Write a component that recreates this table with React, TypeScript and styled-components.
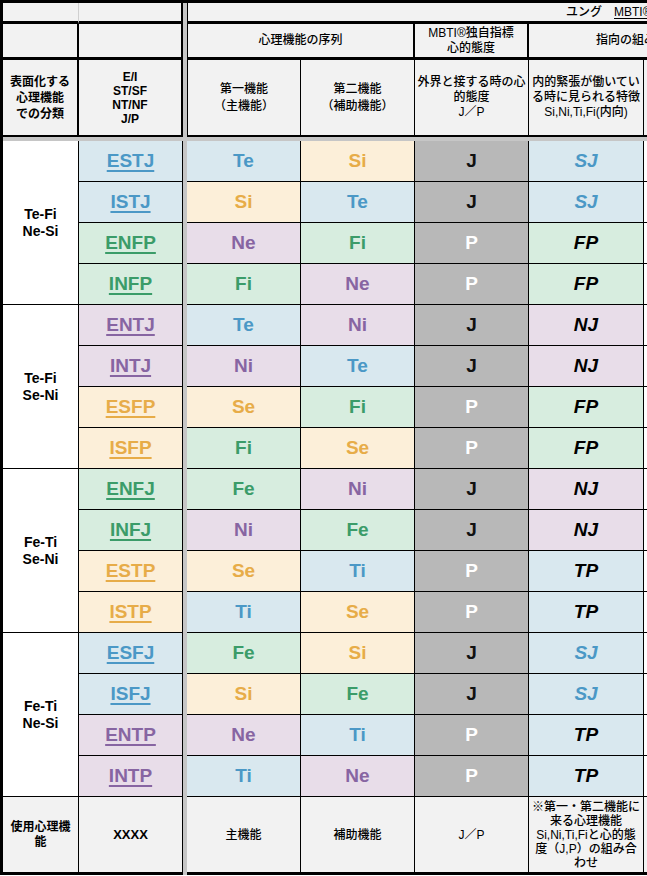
import React from "react";
import styled, { createGlobalStyle } from "styled-components";

const GlobalStyle = createGlobalStyle`
  html, body { margin: 0; padding: 0; overflow: hidden; background: #ffffff; }
  body { font-family: "Liberation Sans", "Noto Sans CJK JP", sans-serif; color: #000; }
`;

type Tone = "blue" | "orange" | "purple" | "green";

const palette: Record<Tone, { bg: string; fg: string }> = {
  blue: { bg: "#d9e8ef", fg: "#4b98c6" },
  orange: { bg: "#fcefd9", fg: "#e7ac48" },
  purple: { bg: "#e8dde9", fg: "#8765a2" },
  green: { bg: "#d7eddf", fg: "#3b9c69" },
};

const HEAD_BG = "#f2f2f2";
const FREEZE = "#c6c6c6";

const Page = styled.div`
  width: 647px;
  height: 876px;
  overflow: hidden;
`;

const Sheet = styled.div`
  display: grid;
  grid-template-columns: 76px 104px 4px 114px 114px 114px 115px 80px;
  grid-template-rows: 21px 36px 77px 4px repeat(16, 41px) 78px;
  width: max-content;
  border-top: 3px solid #000;
  border-left: 3px solid #000;
`;

type CellProps = {
  $right?: number;
  $bottom?: number;
  $left?: number;
  $bg?: string;
  $rightColor?: string;
  $span?: number;
  $rows?: number;
};

const Cell = styled.div<CellProps>`
  box-sizing: border-box;
  display: flex;
  align-items: center;
  justify-content: center;
  text-align: center;
  overflow: hidden;
  white-space: pre;
  background: ${(p) => p.$bg ?? "#fff"};
  border-right: ${(p) => p.$right ?? 1}px solid ${(p) => p.$rightColor ?? "#000"};
  border-bottom: ${(p) => p.$bottom ?? 1}px solid #000;
  border-left: ${(p) => p.$left ?? 0}px solid #000;
  grid-column: ${(p) => (p.$span ? `span ${p.$span}` : "auto")};
  grid-row: ${(p) => (p.$rows ? `span ${p.$rows}` : "auto")};
`;

const FreezeColumn = styled.div`
  grid-column: 3;
  grid-row: 1 / -1;
  background: ${FREEZE};
`;

const FreezeRow = styled.div`
  grid-column: 1 / -1;
  grid-row: 4;
  background: ${FREEZE};
`;

const Banner = styled(Cell)`
  justify-content: flex-start;
  padding-left: 378px;
  font-size: 12px;
  font-weight: 500;
  line-height: 14px;
  background: ${HEAD_BG};
`;

const BannerLink = styled.span`
  text-decoration: underline;
  text-underline-offset: 2px;
`;

const Title = styled(Cell)<{ $indent?: number }>`
  font-size: 12px;
  font-weight: 500;
  line-height: 15px;
  background: ${HEAD_BG};
  justify-content: ${(p) => (p.$indent ? "flex-start" : "center")};
  padding-left: ${(p) => p.$indent ?? 0}px;
`;

const ColumnHead = styled(Cell)<{ $bold?: boolean; $lh?: number }>`
  font-size: 12px;
  line-height: ${(p) => p.$lh ?? 16}px;
  font-weight: ${(p) => (p.$bold ? 700 : 500)};
  background: ${HEAD_BG};
`;

const EdgeHead = styled(Cell)`
  justify-content: flex-start;
  padding-left: 2px;
  font-size: 12px;
  color: #e7ac48;
  background: ${HEAD_BG};
`;

const GroupCell = styled(Cell)`
  font-size: 14px;
  font-weight: 700;
  line-height: 17px;
`;

const TypeCell = styled(Cell)<{ $tone: Tone }>`
  background: ${(p) => palette[p.$tone].bg};
  color: ${(p) => palette[p.$tone].fg};
  font-size: 19px;
  font-weight: 700;
  text-decoration: underline;
  text-decoration-thickness: 2px;
  text-underline-offset: 3px;
`;

const FuncCell = styled(Cell)<{ $tone: Tone }>`
  background: ${(p) => palette[p.$tone].bg};
  color: ${(p) => palette[p.$tone].fg};
  font-size: 19px;
  font-weight: 700;
`;

const AttitudeCell = styled(Cell)<{ $value: "J" | "P" }>`
  background: #b8b8b8;
  color: ${(p) => (p.$value === "J" ? "#111" : "#ffffff")};
  font-size: 19px;
  font-weight: 700;
`;

const TraitCell = styled(Cell)<{ $tone: Tone; $tinted: boolean }>`
  background: ${(p) => palette[p.$tone].bg};
  color: ${(p) => (p.$tinted ? palette[p.$tone].fg : "#000")};
  font-size: 19px;
  font-weight: 700;
  font-style: italic;
`;

const EdgeCell = styled(Cell)``;

const FootCell = styled(Cell)<{ $bold?: boolean; $size?: number; $lh?: number }>`
  background: ${HEAD_BG};
  font-size: ${(p) => p.$size ?? 12}px;
  line-height: ${(p) => p.$lh ?? 14}px;
  font-weight: ${(p) => (p.$bold ? 700 : 500)};
`;

const toneOf = (fn: string): Tone => {
  const c = fn[0];
  if (c === "T") return "blue";
  if (c === "S") return "orange";
  if (c === "N") return "purple";
  return "green";
};

type Row = {
  type: string;
  tone: Tone;
  f1: string;
  f2: string;
  att: "J" | "P";
  trait: "SJ" | "FP" | "NJ" | "TP";
};

const traitTone: Record<Row["trait"], Tone> = {
  SJ: "blue",
  FP: "green",
  NJ: "purple",
  TP: "blue",
};

const groups: { label: string; rows: Row[] }[] = [
  {
    label: "Te-Fi\nNe-Si",
    rows: [
      { type: "ESTJ", tone: "blue", f1: "Te", f2: "Si", att: "J", trait: "SJ" },
      { type: "ISTJ", tone: "blue", f1: "Si", f2: "Te", att: "J", trait: "SJ" },
      { type: "ENFP", tone: "green", f1: "Ne", f2: "Fi", att: "P", trait: "FP" },
      { type: "INFP", tone: "green", f1: "Fi", f2: "Ne", att: "P", trait: "FP" },
    ],
  },
  {
    label: "Te-Fi\nSe-Ni",
    rows: [
      { type: "ENTJ", tone: "purple", f1: "Te", f2: "Ni", att: "J", trait: "NJ" },
      { type: "INTJ", tone: "purple", f1: "Ni", f2: "Te", att: "J", trait: "NJ" },
      { type: "ESFP", tone: "orange", f1: "Se", f2: "Fi", att: "P", trait: "FP" },
      { type: "ISFP", tone: "orange", f1: "Fi", f2: "Se", att: "P", trait: "FP" },
    ],
  },
  {
    label: "Fe-Ti\nSe-Ni",
    rows: [
      { type: "ENFJ", tone: "green", f1: "Fe", f2: "Ni", att: "J", trait: "NJ" },
      { type: "INFJ", tone: "green", f1: "Ni", f2: "Fe", att: "J", trait: "NJ" },
      { type: "ESTP", tone: "orange", f1: "Se", f2: "Ti", att: "P", trait: "TP" },
      { type: "ISTP", tone: "orange", f1: "Ti", f2: "Se", att: "P", trait: "TP" },
    ],
  },
  {
    label: "Fe-Ti\nNe-Si",
    rows: [
      { type: "ESFJ", tone: "blue", f1: "Fe", f2: "Si", att: "J", trait: "SJ" },
      { type: "ISFJ", tone: "blue", f1: "Si", f2: "Fe", att: "J", trait: "SJ" },
      { type: "ENTP", tone: "purple", f1: "Ne", f2: "Ti", att: "P", trait: "TP" },
      { type: "INTP", tone: "purple", f1: "Ti", f2: "Ne", att: "P", trait: "TP" },
    ],
  },
];

export default function App() {
  return (
    <Page>
      <GlobalStyle />
      <Sheet>
        <FreezeColumn />
        <FreezeRow />

        {/* row 1 */}
        <Title $bottom={3} $right={1} $rightColor="#d0d0d0" />
        <Title $bottom={3} $right={2} />
        <Banner $bottom={3} $right={0} $left={1} $span={5}>
          ユング　<BannerLink>MBTI®の</BannerLink>
        </Banner>

        {/* row 2 */}
        <Title $bottom={3} $right={2} />
        <Title $bottom={3} $right={2} />
        <Title $bottom={3} $right={2} $left={1} $span={2}>
          心理機能の序列
        </Title>
        <Title $bottom={3} $right={2}>
          {"MBTI®独自指標\n心的態度"}
        </Title>
        <Title $bottom={3} $right={0} $span={2} $indent={67}>
          指向の組み合わせ
        </Title>

        {/* row 3 */}
        <ColumnHead $bottom={2} $right={2} $bold>
          {"表面化する\n心理機能\nでの分類"}
        </ColumnHead>
        <ColumnHead $bottom={2} $right={2} $bold $lh={14}>
          {"E/I\nST/SF\nNT/NF\nJ/P"}
        </ColumnHead>
        <ColumnHead $bottom={2} $left={1} $lh={17}>
          {"第一機能\n（主機能）"}
        </ColumnHead>
        <ColumnHead $bottom={2} $lh={17}>
          {"第二機能\n（補助機能）"}
        </ColumnHead>
        <ColumnHead $bottom={2} $lh={15}>
          {"外界と接する時の心\n的態度\nJ／P"}
        </ColumnHead>
        <ColumnHead $bottom={2} $lh={15}>
          {"内的緊張が働いてい\nる時に見られる特徴\nSi,Ni,Ti,Fi(内向)"}
        </ColumnHead>
        <EdgeHead $bottom={2} $right={0}>
          ※外向
        </EdgeHead>

        {/* data */}
        {groups.map((g) =>
          g.rows.map((r, i) => (
            <React.Fragment key={r.type}>
              {i === 0 && <GroupCell $rows={4}>{g.label}</GroupCell>}
              <TypeCell $tone={r.tone}>{r.type}</TypeCell>
              <FuncCell $tone={toneOf(r.f1)}>{r.f1}</FuncCell>
              <FuncCell $tone={toneOf(r.f2)}>{r.f2}</FuncCell>
              <AttitudeCell $value={r.att}>{r.att}</AttitudeCell>
              <TraitCell $tone={traitTone[r.trait]} $tinted={r.trait === "SJ"}>
                {r.trait}
              </TraitCell>
              <EdgeCell $right={0} />
            </React.Fragment>
          ))
        )}

        {/* footer row */}
        <FootCell $bottom={3} $bold $size={12} $lh={15}>
          {"使用心理機\n能"}
        </FootCell>
        <FootCell $bottom={3} $bold $size={13}>
          XXXX
        </FootCell>
        <FootCell $bottom={3}>主機能</FootCell>
        <FootCell $bottom={3}>補助機能</FootCell>
        <FootCell $bottom={3}>J／P</FootCell>
        <FootCell $bottom={3} $lh={14}>
          {"※第一・第二機能に\n来る心理機能\nSi,Ni,Ti,Fiと心的態\n度（J,P）の組み合\nわせ"}
        </FootCell>
        <FootCell $bottom={3} $right={0} />
      </Sheet>
    </Page>
  );
}
